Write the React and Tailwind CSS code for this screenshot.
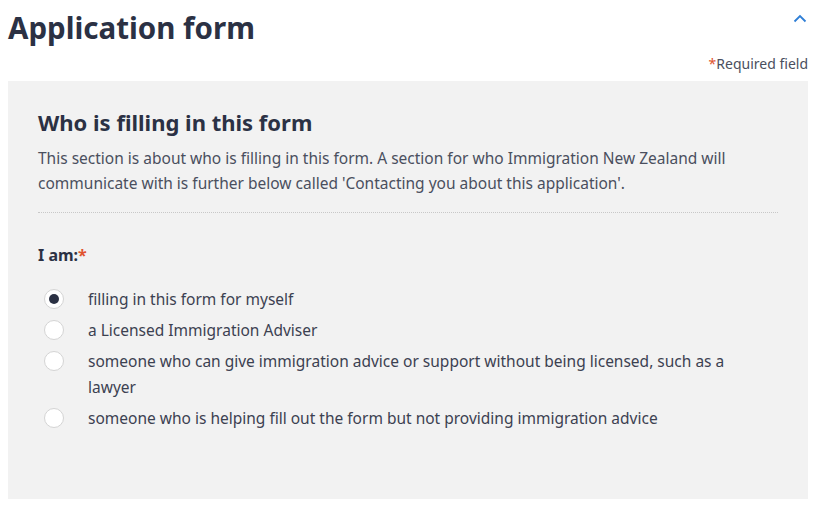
import React, { useState } from "react";

const options = [
  "filling in this form for myself",
  "a Licensed Immigration Adviser",
  "someone who can give immigration advice or support without being licensed, such as a lawyer",
  "someone who is helping fill out the form but not providing immigration advice",
];

export default function App() {
  const [selected, setSelected] = useState(0);

  return (
    <div
      className="w-[818px] h-[512px] bg-white pl-2 pr-[10px] text-[#2b3144]"
      style={{ fontFamily: '"Noto Sans", "Open Sans", sans-serif' }}
    >
      <div className="flex items-start justify-between pt-[9px]">
        <h1 className="text-[29.5px] leading-[37px] font-bold">Application form</h1>
        <button className="mt-[4px] mr-[1px] text-[#2f7fd6]">
          <svg width="14" height="10" viewBox="0 0 14 10" fill="none">
            <path d="M1.5 8.5 L7 3 L12.5 8.5" stroke="currentColor" strokeWidth="1.8" />
          </svg>
        </button>
      </div>
      <p className="mt-[8px] text-right text-[14px] leading-[20px] text-[#4a4f5e]">
        <span className="text-[#e0532f]">*</span>Required field
      </p>

      <div className="mt-[7px] h-[418px] bg-[#f2f2f2] px-[30px] pt-[26px]">
        <h2 className="text-[22px] leading-[30px] font-bold">Who is filling in this form</h2>
        <p className="mt-[9px] text-[15.5px] leading-[25px] text-[#4a4f5e]">
          This section is about who is filling in this form. A section for who Immigration New Zealand will
          communicate with is further below called 'Contacting you about this application'.
        </p>
        <div className="mt-[16px] border-t border-dotted border-[#c8c8c8]" />

        <p className="mt-[30px] text-[16px] leading-[24px] font-bold">
          I am:<span className="text-[#e0532f]">*</span>
        </p>

        <div className="mt-[19px] flex flex-col gap-[5px]">
          {options.map((opt, i) => (
            <label key={i} className="flex items-start cursor-pointer" onClick={() => setSelected(i)}>
              <span className="ml-[6px] mt-[3px] flex h-[20px] w-[20px] shrink-0 items-center justify-center rounded-full border border-[#d4d4d4] bg-white">
                {selected === i && <span className="h-[10px] w-[10px] rounded-full bg-[#2b3144]" />}
              </span>
              <span className="ml-[24px] pr-[20px] text-[15.5px] leading-[26px] text-[#3c4151]">{opt}</span>
            </label>
          ))}
        </div>
      </div>
    </div>
  );
}
